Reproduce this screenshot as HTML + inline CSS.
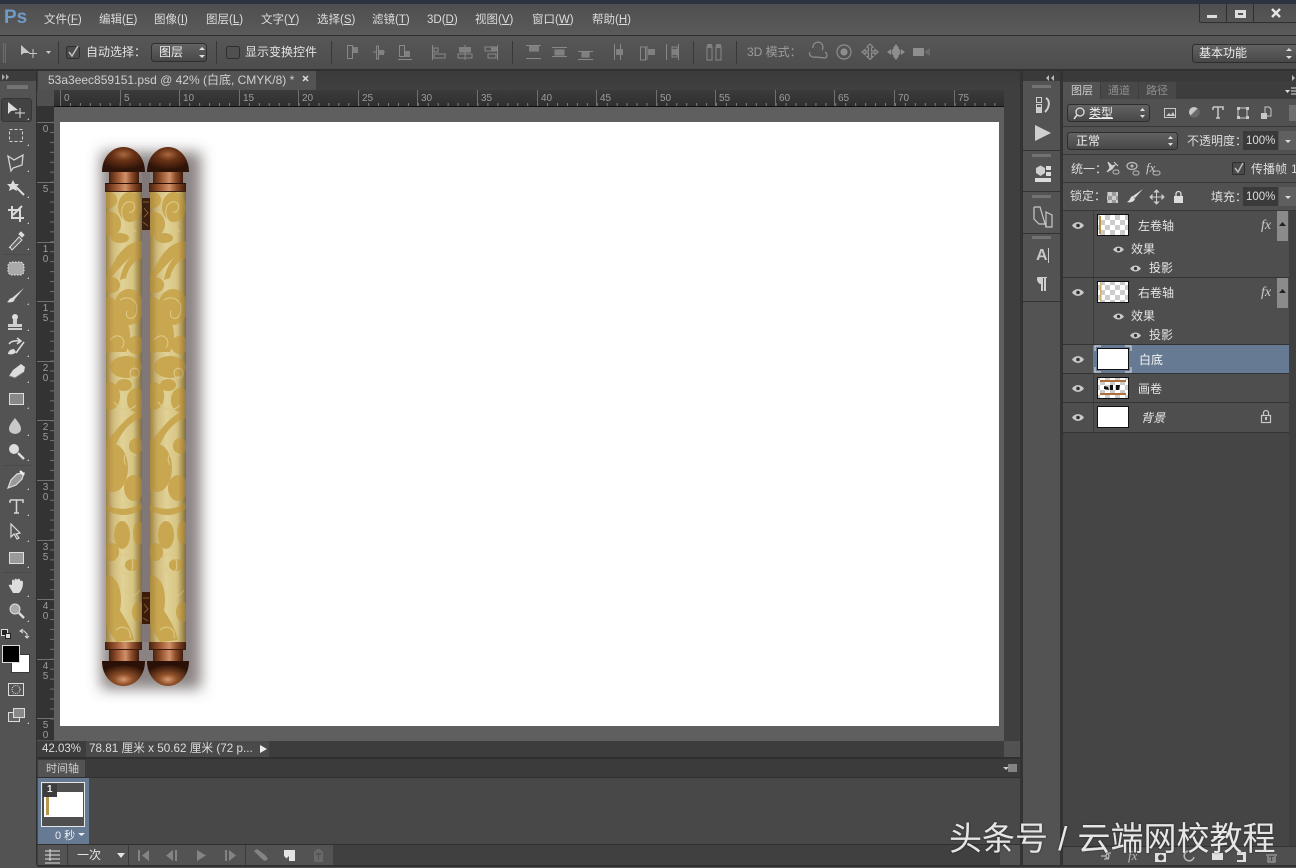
<!DOCTYPE html>
<html><head><meta charset="utf-8">
<style>
html,body{margin:0;padding:0;background:#535353}
body{width:1296px;height:868px;overflow:hidden;position:relative;font-family:"Liberation Sans","Noto Sans CJK SC",sans-serif;font-size:12px;color:#d8d8d8}
svg.o{position:absolute;left:0;top:0}
.t{position:absolute;white-space:nowrap;line-height:16px}
.m{color:#dcdcdc;top:12px;font-size:11.5px}
.m u{text-decoration:underline}
.r{position:absolute;top:93px;font-size:10px;color:#9c9c9c;line-height:12px}
.v{position:absolute;left:41px;font-size:10px;color:#9c9c9c;line-height:10px;width:9px;text-align:center}
.l{color:#e4e4e4;font-size:12px}
.w{position:absolute;left:949px;top:819px;font-size:33px;line-height:40px;color:#e6e6e6;font-weight:400;white-space:nowrap;word-spacing:1px;text-shadow:0 0 2px rgba(0,0,0,.45)}
</style></head><body>
<svg class="o" width="1296" height="868" viewBox="0 0 1296 868" xmlns="http://www.w3.org/2000/svg">
<defs>
<linearGradient id="bar" x1="0" y1="0" x2="0" y2="1"><stop offset="0" stop-color="#4f4f4f"/><stop offset="1" stop-color="#5a5a5a"/></linearGradient>
<linearGradient id="opt" x1="0" y1="0" x2="0" y2="1"><stop offset="0" stop-color="#575757"/><stop offset="1" stop-color="#4d4d4d"/></linearGradient>
<linearGradient id="sel" x1="0" y1="0" x2="0" y2="1"><stop offset="0" stop-color="#636363"/><stop offset="1" stop-color="#474747"/></linearGradient>
<linearGradient id="rul" x1="0" y1="0" x2="0" y2="1"><stop offset="0" stop-color="#3b3b3b"/><stop offset="1" stop-color="#2f2f2f"/></linearGradient>
<linearGradient id="tab" x1="0" y1="0" x2="0" y2="1"><stop offset="0" stop-color="#3a3a3a"/><stop offset="1" stop-color="#404040"/></linearGradient>
<linearGradient id="body" x1="0" y1="0" x2="1" y2="0"><stop offset="0" stop-color="#b59b55"/><stop offset=".15" stop-color="#cdb777"/><stop offset=".45" stop-color="#e0d196"/><stop offset=".72" stop-color="#d8c786"/><stop offset=".92" stop-color="#b9a25f"/><stop offset="1" stop-color="#9c864d"/></linearGradient>
<linearGradient id="edge" x1="0" y1="0" x2="1" y2="0"><stop offset="0" stop-color="#6e5020" stop-opacity=".32"/><stop offset=".22" stop-color="#6e5020" stop-opacity="0"/><stop offset=".78" stop-color="#6e5020" stop-opacity="0"/><stop offset="1" stop-color="#5e4a28" stop-opacity=".45"/></linearGradient>
<linearGradient id="cop" x1="0" y1="0" x2="1" y2="0"><stop offset="0" stop-color="#4b200d"/><stop offset=".3" stop-color="#9c5833"/><stop offset=".55" stop-color="#d09068"/><stop offset=".75" stop-color="#8e4d2b"/><stop offset="1" stop-color="#3e1a0a"/></linearGradient>
<radialGradient id="d1" cx=".5" cy=".3" r=".62"><stop offset="0" stop-color="#a8683f"/><stop offset=".4" stop-color="#6a3216"/><stop offset="1" stop-color="#2e1308"/></radialGradient>
<radialGradient id="d2" cx=".5" cy=".74" r=".6"><stop offset="0" stop-color="#d89a72"/><stop offset=".35" stop-color="#8f5029"/><stop offset="1" stop-color="#2a1006"/></radialGradient>
<pattern id="chk" width="10" height="10" patternUnits="userSpaceOnUse"><rect width="10" height="10" fill="#fff"/><rect width="5" height="5" fill="#ccc"/><rect x="5" y="5" width="5" height="5" fill="#ccc"/></pattern>
<pattern id="chk2" width="8" height="8" patternUnits="userSpaceOnUse"><rect width="8" height="8" fill="#ccc"/><rect width="4" height="4" fill="#999"/><rect x="4" y="4" width="4" height="4" fill="#999"/></pattern>
<pattern id="hmin" width="9.94" height="3" patternUnits="userSpaceOnUse" x="60" y="103"><rect x="0" y="0" width="1" height="3" fill="#7c7c7c"/></pattern>
<pattern id="vmin" width="4" height="9.94" patternUnits="userSpaceOnUse" x="50" y="122"><rect x="0" y="0" width="4" height="1" fill="#707070"/></pattern>
<clipPath id="cb"><rect x="0" y="191" width="36" height="451"/></clipPath>
<filter id="bl" x="-40%" y="-10%" width="180%" height="120%"><feGaussianBlur stdDeviation="7"/></filter>
<g id="clouds" clip-path="url(#cb)">
<g fill="#c9a650">
<ellipse cx="24" cy="207" rx="12" ry="15"/><ellipse cx="4" cy="224" rx="11" ry="12"/><ellipse cx="14" cy="238" rx="9" ry="5"/><ellipse cx="3" cy="200" rx="8" ry="8"/>
<path d="M37 241C24 241 14 250 8 262L0 276 0 282C12 272 20 256 37 251Z"/>
<path d="M37 258C28 260 22 268 20 278L14 280C16 266 24 254 37 250Z"/><ellipse cx="5" cy="285" rx="9" ry="8"/>
<ellipse cx="23" cy="307" rx="15" ry="18"/><ellipse cx="3" cy="325" rx="13" ry="28"/><path d="M8 300C24 320 28 336 20 352L2 352 0 300Z"/>
<ellipse cx="30" cy="345" rx="9" ry="9"/><ellipse cx="20" cy="367" rx="16" ry="11"/><ellipse cx="4" cy="396" rx="10" ry="14"/><ellipse cx="30" cy="400" rx="9" ry="12"/><ellipse cx="18" cy="385" rx="8" ry="6"/>
<path d="M37 418C26 420 18 428 10 444L0 448 0 442C10 432 20 414 37 410Z"/>
<ellipse cx="7" cy="468" rx="15" ry="24"/><ellipse cx="28" cy="488" rx="10" ry="13"/><ellipse cx="30" cy="446" rx="7" ry="8"/><path d="M0 505C12 510 24 511 37 502L37 508C24 518 10 516 0 510Z"/>
<ellipse cx="16" cy="535" rx="8" ry="14"/><ellipse cx="33" cy="533" rx="6" ry="12"/><ellipse cx="6" cy="552" rx="7" ry="9"/><ellipse cx="26" cy="565" rx="7" ry="6"/>
<ellipse cx="3" cy="600" rx="12" ry="24"/><path d="M2 590C12 610 24 622 28 640L10 642 0 625Z"/><ellipse cx="33" cy="612" rx="7" ry="10"/>
</g>
<g fill="none" stroke="#dcc987" stroke-width="1.100">
<path d="M20 222C12 215 16 200 25 202 32 204 28 214 23 212"/><path d="M30 232C24 226 22 236 27 238"/>
<path d="M14 300C24 294 34 302 30 314 27 322 18 318 21 311"/><path d="M4 340C12 330 22 340 16 348"/>
<path d="M26 378C20 370 30 364 33 372 34 378 28 380 27 376"/><path d="M8 402C14 410 24 412 30 405"/>
<path d="M20 465C14 455 24 448 30 456"/><path d="M10 560C18 548 30 556 26 570 22 578 14 574 17 566"/>
<path d="M18 590C24 600 30 596 34 590"/><path d="M10 630C16 624 26 628 24 638"/>
</g>
</g>
</defs>
<rect width="1296" height="868" fill="#535353"/>
<rect width="1296" height="4" fill="#2e3342"/>
<rect y="4" width="1296" height="31" fill="url(#bar)"/>
<rect y="35" width="1296" height="1" fill="#2f2f2f"/>
<rect y="36" width="1296" height="33" fill="url(#opt)"/>
<rect y="69" width="1296" height="2" fill="#303030"/>

<!-- window buttons -->
<path d="M1199 4V21Q1199 23 1201 23H1296V22H1201Q1200 22 1200 21V4Z" fill="#2f2f2f"/>
<rect x="1226" y="4" width="1" height="18" fill="#2f2f2f"/><rect x="1253" y="4" width="1" height="18" fill="#2f2f2f"/>
<rect x="1207" y="15" width="10" height="3" fill="#ddd"/>
<path d="M1235 10h11v8h-11zM1238 13v2h5v-2z" fill="#ddd" fill-rule="evenodd"/>
<path d="M1272 9l8 8M1280 9l-8 8" stroke="#e4e4e4" stroke-width="2.4"/>

<!-- options bar -->
<rect x="3" y="43" width="1" height="20" fill="#6f6f6f"/><rect x="5" y="43" width="1" height="20" fill="#6f6f6f"/>
<path d="M21 45v10l3-2 6 0z" fill="#c8c8c8"/>
<path d="M33 49v9M29 53.5h8" stroke="#c8c8c8" stroke-width="1"/>
<path d="M46 51l5 0-2.500 3z" fill="#c8c8c8"/>
<g fill="#383838"><rect x="58" y="41" width="1" height="23"/><rect x="216" y="41" width="1" height="23"/><rect x="331" y="41" width="1" height="23"/><rect x="512" y="41" width="1" height="23"/><rect x="693" y="41" width="1" height="23"/><rect x="736" y="41" width="1" height="23"/></g>
<rect x="66.500" y="46.500" width="13" height="12" rx="2" fill="#4a4a4a" stroke="#2e2e2e"/>
<path d="M69 52l3 4 6-10" fill="none" stroke="#bbb" stroke-width="1.600"/>
<rect x="151.500" y="43.500" width="55" height="18" rx="3" fill="url(#sel)" stroke="#2e2e2e"/>
<path d="M199 50l3-3 3 3zM199 55l3 3 3-3z" fill="#ddd"/>
<rect x="226.500" y="46.500" width="13" height="12" rx="2" fill="#505050" stroke="#2e2e2e"/>
<g fill="none" stroke="#888" stroke-width="1">
<path d="M347.500 45.500h5v13h-5z"/><path d="M373 52h4M383 52h2M378.500 46v13h-2v-13z M378.500 46h-2"/><path d="M399.500 45.500h5v11h-5zM398 59.500h14"/>
<path d="M432.500 45v15M434 48h4v4h-4zM434 54h11v4h-11z"/>
<path d="M465 45v15M460 48h10v4h-10zM458 54h14v4h-14z"/>
<path d="M497.500 45v15M485 47h11v4h-11zM488 54h8v4h-8z"/>
<path d="M526 45.500h15M529 51h10M526 58.500h15"/><path d="M552 47.500h15M552 56.500h15M555 50h9v5h-9z"/><path d="M578 59.500h15M582 52h7v5h-7zM578 51.500h15"/>
<path d="M614.500 44v16M620.500 44v16"/><path d="M640.500 47v13h5v-13zM647 46v14"/><path d="M666.500 44v16M672 47h5v10h-5zM678.500 44v16"/>
<path d="M707 47h5v13h-5zM716 47h5v13h-5z"/>
</g>
<g fill="#808080"><rect x="353" y="47" width="5" height="6"/><rect x="379" y="50" width="5" height="5"/><rect x="405" y="51" width="5" height="6"/><rect x="459" y="47" width="12" height="5"/><rect x="491" y="47" width="6" height="4"/><rect x="529" y="46" width="10" height="5"/><rect x="555" y="50" width="9" height="5"/><rect x="582" y="52" width="7" height="5"/><rect x="616" y="49" width="7" height="6"/><rect x="648" y="49" width="7" height="6"/><rect x="672" y="49" width="6" height="6"/><rect x="707" y="44" width="5" height="4"/><rect x="716" y="44" width="5" height="4"/></g>
<!-- 3D icons -->
<g fill="none" stroke="#8e8e8e" stroke-width="1.200">
<path d="M810 52c-2 3 2 6 6 5l9 1c3-1 2-5 0-6M813 48a5 5 0 1 1 9 2"/>
<circle cx="844" cy="52" r="7"/><circle cx="844" cy="52" r="3" fill="#8e8e8e"/>
<path d="M870 44l3 3-1.500 1v3h3.500v-1.500l3 2.500-3 2.500v-1.500h-3.500v3.500l1.500 0-3 3-3-3h1.500v-3.500h-3.500v1.500l-3-2.500 3-2.500v1.500h3.500v-3l-1.500-1z"/>
</g>
<g fill="#8e8e8e"><circle cx="896" cy="52" r="4.500"/><path d="M896 44l3 4h-6zM896 60l3-4h-6zM887 52l4-3v6zM905 52l-4-3v6z"/><rect x="913" y="48" width="11" height="8"/><path d="M924 52l6-4v8z" fill="#6a6a6a"/></g>
<rect x="1192.500" y="44.500" width="110" height="18" rx="3" fill="url(#sel)" stroke="#2e2e2e"/>
<path d="M1286 51l3-3 3 3zM1286 56l3 3 3-3z" fill="#ddd"/>

<!-- tool column -->
<rect x="0" y="71" width="36" height="797" fill="#535353"/>
<rect x="36" y="71" width="1" height="794" fill="#303030"/>
<rect x="0" y="71" width="36" height="10" fill="#3c3c3c"/>
<path d="M2 74l3 3-3 3zM6 74l3 3-3 3z" fill="#aaa"/>
<rect x="7" y="85" width="21" height="4" fill="#8a8a8a" opacity=".6"/>
<rect x="1.500" y="98.500" width="30" height="23" rx="3" fill="#434343" stroke="#363636"/>
<path d="M8 102v12l3-3 7-1z" fill="#ddd"/><path d="M20 108v10M15 113h10" stroke="#ddd"/>
<path d="M27 120l2-2v2zM27 146l2-2v2zM27 172l2-2v2zM27 198l2-2v2zM27 224l2-2v2zM27 250l2-2v2zM27 279l2-2v2zM27 305l2-2v2zM27 331l2-2v2zM27 357l2-2v2zM27 383l2-2v2zM27 409l2-2v2zM27 436l2-2v2zM27 461l2-2v2zM27 490l2-2v2zM27 516l2-2v2zM27 542l2-2v2zM27 568l2-2v2zM27 597l2-2v2zM27 622l2-2v2zM27 724l2-2v2z" fill="#c0c0c0"/>
<rect x="9.500" y="129.500" width="13" height="12" fill="none" stroke="#d2d2d2" stroke-dasharray="3 2"/>
<path d="M8 156l6 4 9-5-1 10-9 3-2 3-1-5z" fill="none" stroke="#d2d2d2" stroke-width="1.300"/>
<path d="M13 180l2 4 4 0-3 3 1 4-4-2-4 2 1-4-3-3 4 0z" fill="#ddd"/><path d="M16 187l8 8" stroke="#ddd" stroke-width="2"/>
<path d="M12 206v12h12M8 210h12v12M22 206l-9 9" fill="none" stroke="#d8d8d8" stroke-width="2"/>
<path d="M10 247l-1 1 10-11 3 3-10 10z" fill="#666" stroke="#ddd"/><path d="M19 234l2-2 3 3-2 2z" fill="#ddd" stroke="#ddd"/>
<rect x="8" y="262" width="16" height="13" rx="4" fill="#aaa"/><rect x="8" y="262" width="16" height="13" rx="4" fill="none" stroke="#eee" stroke-dasharray="1.500 1.500"/>
<path d="M24 288l-10 12-2-2z" fill="#ddd"/><path d="M12 298c2 0 3 2 2 3s-4 2-7 1c2-1 2-4 5-4z" fill="#ddd"/>
<circle cx="15" cy="317" r="3" fill="#ddd"/><path d="M13 319h4v5h5v3H8v-3h5zM8 328h14v2H8z" fill="#cfcfcf"/>
<path d="M9 344c3-4 8-3 11-3M17 338l4 3-4 3M24 342l-8 11" fill="none" stroke="#ddd" stroke-width="1.500"/><path d="M14 349c-3 0-6 2-6 5 3 1 7 0 8-2z" fill="#ddd"/>
<path d="M13 370l8-6 4 3-1 5-9 6-6-2z" fill="#ddd"/><path d="M9 376l6 2 9-6" fill="none" stroke="#777"/>
<rect x="9.500" y="393.500" width="14" height="11" fill="#888" stroke="#ddd"/>
<path d="M15 418c3 4 6 7 6 11a6 5 0 0 1-12 0c0-4 3-7 6-11z" fill="#c8c8c8"/>
<circle cx="14" cy="449" r="5" fill="#ddd"/><path d="M18 453l6 6" stroke="#ddd" stroke-width="2.500"/>
<path d="M24 473l-7 1-6 6-3 8 8-3 6-6z" fill="#999" stroke="#ddd" stroke-width="1.200"/>
<path d="M20 471l4 4" stroke="#eee" stroke-width="2.500"/>
<path d="M10 500h13v3M10 500v3M16.500 500v13M14 513h5" fill="none" stroke="#d8d8d8" stroke-width="1.500"/>
<path d="M11 524v13l3-3 3 5 2-1-3-4 4-1z" fill="#555" stroke="#ddd" stroke-width="1.200"/>
<rect x="9.500" y="552.500" width="14" height="11" fill="#9a9a9a" stroke="#ddd"/>
<path d="M9 586c-1-1 1-2 3-1v-4c0-2 2-2 2 0l1-2c1-1 2 0 2 1l1-1c1-1 2 0 2 1v1c1-1 3 0 3 1 0 5-1 8-4 11h-6z" fill="#ddd"/>
<circle cx="15" cy="609" r="5" fill="#aaa" stroke="#ddd"/><path d="M19 613l5 5" stroke="#ddd" stroke-width="2.500"/>
<g fill="#4a4a4a"><rect x="3" y="254" width="28" height="1"/><rect x="3" y="465" width="28" height="1"/><rect x="3" y="572" width="28" height="1"/></g>
<rect x="1.500" y="629.500" width="6" height="6" fill="#222" stroke="#ddd"/><rect x="5.500" y="633.500" width="5" height="5" fill="#ddd" stroke="#222"/>
<path d="M20 631h4l3 3v4M23 629l-3 2 3 2M25 636l2 2 2-2" fill="none" stroke="#ddd"/>
<rect x="11.500" y="654.500" width="18" height="18" fill="#fff" stroke="#3a3a3a"/>
<rect x="2.500" y="645.500" width="17" height="17" fill="#000" stroke="#ddd"/>
<rect x="8.500" y="683.500" width="15" height="12" fill="#555" stroke="#ddd"/><circle cx="16" cy="689.500" r="4" fill="none" stroke="#ddd" stroke-dasharray="1 1"/>
<rect x="8.500" y="712.500" width="11" height="9" fill="#666" stroke="#ddd"/><rect x="13.500" y="708.500" width="11" height="9" fill="#888" stroke="#ddd"/>

<!-- tab bar -->
<rect x="37" y="71" width="983" height="19" fill="url(#tab)"/>
<rect x="38" y="71" width="278" height="19" fill="#535353"/>
<path d="M303 76l5 5M308 76l-5 5" stroke="#ddd" stroke-width="1.500"/>
<!-- rulers -->
<rect x="37" y="90" width="967" height="16" fill="url(#rul)"/>
<rect x="37" y="90" width="17" height="16" fill="#505050"/>
<rect x="37" y="106" width="17" height="634" fill="#333"/>
<rect x="55" y="103" width="949" height="3" fill="url(#hmin)"/>
<rect x="50" y="122" width="4" height="604" fill="url(#vmin)"/>
<g fill="#707070"><rect x="60" y="90" width="1" height="16"/><rect x="120" y="90" width="1" height="16"/><rect x="179" y="90" width="1" height="16"/><rect x="239" y="90" width="1" height="16"/><rect x="298" y="90" width="1" height="16"/><rect x="358" y="90" width="1" height="16"/><rect x="417" y="90" width="1" height="16"/><rect x="477" y="90" width="1" height="16"/><rect x="537" y="90" width="1" height="16"/><rect x="596" y="90" width="1" height="16"/><rect x="656" y="90" width="1" height="16"/><rect x="715" y="90" width="1" height="16"/><rect x="775" y="90" width="1" height="16"/><rect x="834" y="90" width="1" height="16"/><rect x="894" y="90" width="1" height="16"/><rect x="954" y="90" width="1" height="16"/>
<rect x="37" y="122" width="17" height="1"/><rect x="37" y="182" width="17" height="1"/><rect x="37" y="242" width="17" height="1"/><rect x="37" y="301" width="17" height="1"/><rect x="37" y="361" width="17" height="1"/><rect x="37" y="420" width="17" height="1"/><rect x="37" y="480" width="17" height="1"/><rect x="37" y="540" width="17" height="1"/><rect x="37" y="599" width="17" height="1"/><rect x="37" y="659" width="17" height="1"/><rect x="37" y="718" width="17" height="1"/></g>
<rect x="54" y="106" width="950" height="1" fill="#111"/>
<rect x="54" y="107" width="950" height="634" fill="#5f5f5f"/>
<rect x="60" y="122" width="939" height="604" fill="#fff"/>
<!-- scrollbars -->
<rect x="1004" y="90" width="16" height="651" fill="#3f3f3f"/>
<rect x="37" y="741" width="967" height="16" fill="#3d3d3d"/>
<rect x="86" y="741" width="183" height="16" fill="#4a4a4a"/>
<rect x="1004" y="741" width="16" height="16" fill="#525252"/>
<path d="M260 745l7 4-7 4z" fill="#eee"/>
<rect x="1020" y="71" width="3" height="794" fill="#333"/>

<!-- scroll art shadow -->
<g filter="url(#bl)"><rect x="101" y="152" width="100" height="537" fill="#5a5050" opacity=".7"/></g>
<rect x="142" y="172" width="8" height="470" fill="#807878"/>
<g transform="translate(142 198)"><rect width="8" height="32" fill="#3a2010"/><path d="M1 4h6M2 10l4 5-4 4M1 24l5 4" stroke="#8a5a30" fill="none"/></g>
<g transform="translate(142 592)"><rect width="8" height="32" fill="#3a1c0c"/><path d="M1 6h6M2 12l4 5-4 4M1 26l5 3" stroke="#8a5a30" fill="none"/></g>
<g>
<g transform="translate(106 0)"><rect x="0" y="191" width="36" height="451" fill="url(#body)"/><use href="#clouds"/><rect x="0" y="191" width="36" height="451" fill="url(#edge)"/></g>
<rect x="109" y="172" width="30" height="12" fill="url(#cop)"/><rect x="105" y="183" width="37" height="9" fill="url(#cop)"/><rect x="105" y="183" width="37" height="1" fill="#2c1206"/><rect x="105" y="191" width="37" height="1" fill="#3e2010"/>
<rect x="105" y="642" width="37" height="8" fill="url(#cop)"/><rect x="109" y="650" width="30" height="12" fill="url(#cop)"/><rect x="105" y="649" width="37" height="1" fill="#3a1a0a"/>
<path d="M102 172c0-15 10-25 21.500-25S145 157 145 172z" fill="url(#d1)"/>
<path d="M102 661c0 15 10 25 21.500 25S145 676 145 661z" fill="url(#d2)"/>
</g>
<g>
<g transform="translate(150 0)"><rect x="0" y="191" width="36" height="451" fill="url(#body)"/><use href="#clouds"/><rect x="0" y="191" width="36" height="451" fill="url(#edge)"/></g>
<rect x="153" y="172" width="30" height="12" fill="url(#cop)"/><rect x="149" y="183" width="37" height="9" fill="url(#cop)"/><rect x="149" y="183" width="37" height="1" fill="#2c1206"/><rect x="149" y="191" width="37" height="1" fill="#3e2010"/>
<rect x="149" y="642" width="37" height="8" fill="url(#cop)"/><rect x="153" y="650" width="30" height="12" fill="url(#cop)"/><rect x="149" y="649" width="37" height="1" fill="#3a1a0a"/>
<path d="M147 172c0-15 10-25 21-25s21 10 21 25z" fill="url(#d1)"/>
<path d="M147 661c0 15 10 25 21 25s21-10 21-25z" fill="url(#d2)"/>
</g>

<!-- timeline -->
<rect x="37" y="757" width="983" height="2" fill="#303030"/>
<rect x="37" y="759" width="983" height="19" fill="#3b3b3b"/>
<rect x="38" y="760" width="47" height="18" fill="#535353"/>
<rect x="37" y="778" width="983" height="67" fill="#484848"/>
<rect x="37" y="777" width="983" height="1" fill="#303030"/>
<path d="M1003 767h6l-3 3z" fill="#ccc"/><path d="M1008 765h9M1008 767h9M1008 769h9M1008 771h9" stroke="#ccc"/>
<rect x="38" y="778" width="51" height="66" fill="#667a94"/>
<rect x="41.500" y="782.500" width="43" height="44" fill="#4f4f4f" stroke="#e6e6e6"/>
<rect x="44" y="792" width="39" height="25" fill="#fff"/>
<rect x="46" y="796" width="3" height="19" fill="#b8964e"/>
<rect x="43" y="784" width="14" height="13" fill="#3d3d3d"/>
<path d="M78 833h7l-3.500 3z" fill="#eee"/>
<rect x="37" y="845" width="963" height="20" fill="#404040"/>
<rect x="38" y="845" width="295" height="20" fill="#535353"/>
<rect x="1000" y="845" width="20" height="20" fill="#535353"/>
<rect x="37" y="844" width="983" height="1" fill="#303030"/>
<rect x="37" y="865" width="1259" height="2" fill="#303030"/>
<g fill="#3a3a3a"><rect x="67" y="845" width="1" height="20"/><rect x="128" y="845" width="1" height="20"/><rect x="245" y="845" width="1" height="20"/></g>
<path d="M45 851h15M45 855h15M45 859h15M50 849v12M45 863h15" stroke="#e0e0e0" fill="none"/>
<path d="M117 853h8l-4 5z" fill="#e4e4e4"/>
<g fill="#848484"><path d="M138 850h2v11h-2zM149 850v11l-7-5.500z"/><path d="M173 850v11l-7-5.500zM175 850h2v11h-2z"/><path d="M197 850v11l9-5.500z"/><path d="M225 850h2v11h-2zM229 850v11l7-5.500z"/><path d="M254 851l3-2 8 6 1 1 2 3-3 2-3-2z"/></g>
<path d="M284 850h11v11h-6l-5-5z" fill="#e4e4e4"/><path d="M289 856v5h-5" fill="#555"/>
<path d="M314 852h9M316 850h5M315 853v8h7v-8M317 855v5M320 855v5" stroke="#7e7e7e" fill="none"/>

<!-- dock -->
<rect x="1023" y="71" width="273" height="10" fill="#3a3a3a"/>
<rect x="1023" y="81" width="37" height="784" fill="#535353"/>
<rect x="1060" y="71" width="3" height="794" fill="#333"/>
<g fill="#333"><rect x="1023" y="150" width="37" height="1"/><rect x="1023" y="191" width="37" height="1"/><rect x="1023" y="233" width="37" height="1"/><rect x="1023" y="301" width="37" height="1"/></g>
<g fill="#888" opacity=".6"><rect x="1032" y="85" width="19" height="3"/><rect x="1032" y="154" width="19" height="3"/><rect x="1032" y="195" width="19" height="3"/><rect x="1032" y="236" width="19" height="3"/></g>
<path d="M1049 75l-3 3 3 3zM1054 75l-3 3 3 3z" fill="#bbb"/><path d="M1292 75l3 3-3 3z" fill="#bbb"/>
<g fill="none" stroke="#d0d0d0"><rect x="1036.500" y="97.500" width="5" height="5"/><rect x="1036.500" y="104.500" width="5" height="5"/><rect x="1036.500" y="107.500" width="5" height="5" fill="#ccc"/><path d="M1046 98c4 2 4 9-1 14" stroke-width="2"/></g>
<path d="M1035 125l16 8-16 8z" fill="#cfcfcf"/>
<path d="M1036 168l4.500-2.500 4.500 2.500v5l-4.500 3-4.500-3z" fill="#cfcfcf"/><rect x="1046" y="166" width="5" height="4" fill="#ddd"/><rect x="1046" y="172" width="5" height="4" fill="#ddd"/><rect x="1035" y="178" width="16" height="4" fill="#dcdcdc"/>
<path d="M1034 207h6l6 20M1034 207v12l5 5h7M1046 212l6 3v12h-6z" fill="none" stroke="#c8c8c8" stroke-width="1.200"/>
<rect x="1048" y="248" width="1" height="15" fill="#ccc"/>
<path d="M1038 277h9v1h-1v13h-2v-13h-1v13h-2v-7c-4 0-5-7-3-7z" fill="#cfcfcf"/>

<!-- layers panel -->
<rect x="1063" y="81" width="233" height="784" fill="#454545"/>
<rect x="1063" y="81" width="233" height="18" fill="#3d3d3d"/>
<rect x="1063" y="82" width="37" height="17" fill="#535353"/>
<rect x="1101" y="82" width="37" height="17" fill="#484848"/><rect x="1139" y="82" width="37" height="17" fill="#484848"/>
<rect x="1063" y="99" width="233" height="112" fill="#515151"/>
<g fill="#383838"><rect x="1063" y="126" width="233" height="1"/><rect x="1063" y="154" width="233" height="1"/><rect x="1063" y="182" width="233" height="1"/><rect x="1063" y="210" width="233" height="1"/></g>
<path d="M1285 90h5l-2.500 3z" fill="#ddd"/><path d="M1291 88h5M1291 91h5M1291 94h5" stroke="#ddd"/>
<rect x="1067.500" y="104.500" width="82" height="17" rx="3" fill="url(#sel)" stroke="#2e2e2e"/>
<circle cx="1080" cy="112" r="4" fill="none" stroke="#ddd" stroke-width="1.300"/><path d="M1077 115l-3 4" stroke="#ddd" stroke-width="1.500"/>
<path d="M1140 111l2.500-3 2.500 3zM1140 115l2.500 3 2.500-3z" fill="#ddd"/>
<rect x="1164.500" y="108.500" width="11" height="9" fill="none" stroke="#c8c8c8"/><path d="M1166 116l3-3 2 2 2-3 2 4z" fill="#ccc"/>
<circle cx="1194" cy="112" r="5" fill="#c8c8c8"/><path d="M1190 116a5 5 0 0 0 8-8z" fill="#6a6a6a"/>
<path d="M1213 107h10v3M1213 107v3M1218 107v11M1216 118h4" fill="none" stroke="#c8c8c8" stroke-width="1.500"/>
<path d="M1238 108h9v10h-9z" fill="none" stroke="#c8c8c8"/><g fill="#c8c8c8"><rect x="1237" y="107" width="3" height="3"/><rect x="1246" y="107" width="3" height="3"/><rect x="1237" y="116" width="3" height="3"/><rect x="1246" y="116" width="3" height="3"/></g>
<path d="M1265 107h4l2 2v7h-6z" fill="none" stroke="#c8c8c8"/><rect x="1261" y="113" width="6" height="6" fill="#c8c8c8"/>
<rect x="1289" y="105" width="7" height="16" fill="#6f6f6f"/>
<rect x="1067.500" y="132.500" width="110" height="17" rx="3" fill="url(#sel)" stroke="#2e2e2e"/>
<path d="M1168 139l2.500-3 2.500 3zM1168 143l2.500 3 2.500-3z" fill="#ddd"/>
<rect x="1243" y="131" width="35" height="19" fill="#3a3a3a"/><rect x="1279" y="131" width="17" height="19" fill="#5f5f5f"/><path d="M1285 140h6l-3 3z" fill="#ddd"/>
<rect x="1243" y="187" width="35" height="19" fill="#3a3a3a"/><rect x="1279" y="187" width="17" height="19" fill="#5f5f5f"/><path d="M1285 196h6l-3 3z" fill="#ddd"/>
<path d="M1108 162l4 4 3-1-3 4-5 3 3-4zM1114 162l4 4" fill="#cfcfcf" stroke="#cfcfcf"/><rect x="1113" y="170" width="6" height="4" rx="2" fill="none" stroke="#bbb"/>
<ellipse cx="1132" cy="166" rx="5" ry="3.500" fill="none" stroke="#bbb" stroke-width="1.300"/><circle cx="1132" cy="166" r="1.500" fill="#bbb"/><rect x="1133" y="171" width="6" height="4" rx="2" fill="none" stroke="#bbb"/>
<rect x="1153" y="171" width="7" height="4" rx="2" fill="none" stroke="#bbb"/>
<rect x="1232.500" y="162.500" width="12" height="12" rx="1" fill="#4a4a4a" stroke="#2e2e2e"/><path d="M1235 168l3 4 5-9" fill="none" stroke="#bbb" stroke-width="1.500"/>
<rect x="1107" y="192" width="11" height="11" fill="url(#chk2)"/>
<path d="M1143 189l-8 9-2-2zM1133 196c-3 0-2 4-6 6 3 1 7 0 8-3z" fill="#ddd"/>
<path d="M1156.500 191v12M1151 197h12M1156.500 190l-2 2h4zM1156.500 204l-2-2h4zM1150 197l2-2v4zM1164 197l-2-2v4z" stroke="#ccc" fill="#ccc"/>
<rect x="1174" y="196" width="9" height="7" fill="#ddd"/><path d="M1176 196v-2a2.500 2.500 0 0 1 5 0v2" fill="none" stroke="#ddd" stroke-width="1.300"/>

<rect x="1063" y="211" width="226" height="222" fill="#4e4e4e"/>
<rect x="1289" y="211" width="7" height="636" fill="#3f3f3f"/>
<rect x="1093" y="211" width="1" height="222" fill="#3b3b3b"/>
<g fill="#333"><rect x="1063" y="277" width="226" height="1"/><rect x="1063" y="344" width="226" height="1"/><rect x="1063" y="373" width="226" height="1"/><rect x="1063" y="402" width="226" height="1"/><rect x="1063" y="432" width="226" height="1"/></g>
<rect x="1093" y="345" width="196" height="28" fill="#667a94"/>
<rect x="1063" y="345" width="30" height="28" fill="#535353"/>
<rect x="1097.500" y="214.500" width="31" height="21" fill="url(#chk)" stroke="#111"/><rect x="1099" y="216" width="2" height="18" fill="#b8964e"/>
<rect x="1097.500" y="281.500" width="31" height="21" fill="url(#chk)" stroke="#111"/><rect x="1100" y="283" width="1.500" height="18" fill="#cdb06a"/>
<rect x="1097.500" y="348.500" width="31" height="21" fill="#fff" stroke="#111"/>
<path d="M1095 351v-5h6M1131 351v-5h-6M1095 367v5h6M1131 367v5h-6" fill="none" stroke="#e4e4e4" stroke-width="1"/>
<rect x="1097.500" y="377.500" width="31" height="21" fill="url(#chk)" stroke="#111"/><rect x="1100" y="380" width="26" height="2" fill="#b0703c"/><rect x="1100" y="393" width="26" height="2" fill="#b0703c"/><path d="M1104 386l4 1 1 3-5-1zM1110 385h3v5h-3zM1116 385h4l-1 5h-3z" fill="#111"/>
<rect x="1097.500" y="406.500" width="31" height="21" fill="#fff" stroke="#111"/>
<g fill="#c8c8c8"><path d="M1072 225.500c3-4.500 9-4.500 12 0-3 4.500-9 4.500-12 0z"/><path d="M1072 292.500c3-4.500 9-4.500 12 0-3 4.500-9 4.500-12 0z"/><path d="M1072 359.500c3-4.500 9-4.500 12 0-3 4.500-9 4.500-12 0z"/><path d="M1072 388.500c3-4.500 9-4.500 12 0-3 4.500-9 4.500-12 0z"/><path d="M1072 417.500c3-4.500 9-4.500 12 0-3 4.500-9 4.500-12 0z"/><path d="M1113 249.500c3-4 8-4 11 0-3 4-8 4-11 0z"/><path d="M1113 316.500c3-4 8-4 11 0-3 4-8 4-11 0z"/><path d="M1130 268.500c3-4 8-4 11 0-3 4-8 4-11 0z"/><path d="M1130 335.500c3-4 8-4 11 0-3 4-8 4-11 0z"/></g>
<g fill="#333"><circle cx="1078" cy="225.500" r="1.800"/><circle cx="1078" cy="292.500" r="1.800"/><circle cx="1078" cy="359.500" r="1.800"/><circle cx="1078" cy="388.500" r="1.800"/><circle cx="1078" cy="417.500" r="1.800"/><circle cx="1118.500" cy="249.500" r="1.600"/><circle cx="1118.500" cy="316.500" r="1.600"/><circle cx="1135.500" cy="268.500" r="1.600"/><circle cx="1135.500" cy="335.500" r="1.600"/></g>
<rect x="1277" y="211" width="11" height="30" fill="#8b8b8b"/><rect x="1277" y="278" width="11" height="30" fill="#8b8b8b"/>
<path d="M1279 226l3.500-4 3.500 4zM1279 293l3.500-4 3.500 4z" fill="#222"/>
<rect x="1261.500" y="415.500" width="9" height="7" fill="none" stroke="#c8c8c8" stroke-width="1.200"/><path d="M1263.500 415v-2a2.500 2.500 0 0 1 5 0v2" fill="none" stroke="#c8c8c8" stroke-width="1.200"/><rect x="1265" y="417" width="2" height="3" fill="#c8c8c8"/>
<rect x="1063" y="847" width="233" height="18" fill="#4f4f4f"/><rect x="1063" y="846" width="233" height="1" fill="#333"/>
<path d="M1101 856h5M1106 853a3 3 0 0 1 0 6h-2M1109 859a3 3 0 0 1 0-6h2" fill="none" stroke="#b8b8b8" stroke-width="1.300"/>
<rect x="1155" y="853" width="11" height="9" fill="#e0e0e0"/><circle cx="1161" cy="857.500" r="3" fill="#444"/>
<path d="M1188 851a5 5 0 1 0 6 6" fill="none" stroke="#bbb" stroke-width="1.500"/>
<rect x="1212" y="853" width="11" height="7" fill="#e0e0e0"/>
<path d="M1237 852h9v10h-9v-2h6v-5h-6z" fill="#e0e0e0"/>
<path d="M1266 855h11M1268 856v6h7v-6M1270 857v4M1273 857v4" stroke="#b0b0b0" fill="none"/>
</svg>

<div class="t" style="left:4px;top:6px;font-size:19px;font-weight:bold;line-height:24px;color:#6f9bc7">Ps</div>
<div class="t m" style="left:44px">文件(<u>F</u>)</div>
<div class="t m" style="left:99px">编辑(<u>E</u>)</div>
<div class="t m" style="left:154px">图像(<u>I</u>)</div>
<div class="t m" style="left:206px">图层(<u>L</u>)</div>
<div class="t m" style="left:261px">文字(<u>Y</u>)</div>
<div class="t m" style="left:317px">选择(<u>S</u>)</div>
<div class="t m" style="left:372px">滤镜(<u>T</u>)</div>
<div class="t m" style="left:427px">3D(<u>D</u>)</div>
<div class="t m" style="left:475px">视图(<u>V</u>)</div>
<div class="t m" style="left:532px">窗口(<u>W</u>)</div>
<div class="t m" style="left:592px">帮助(<u>H</u>)</div>

<div class="t" style="left:86px;top:44px;color:#e2e2e2">自动选择：</div>
<div class="t" style="left:159px;top:44px;color:#ececec">图层</div>
<div class="t" style="left:245px;top:44px;color:#e2e2e2">显示变换控件</div>
<div class="t" style="left:747px;top:44px;color:#9c9c9c">3D 模式：</div>
<div class="t" style="left:1199px;top:45px;color:#ececec">基本功能</div>

<div class="t" style="left:48px;top:72px;color:#cfcfcf;font-size:12px">53a3eec859151.psd @ 42% (白底, CMYK/8) *</div>

<div class="r" style="left:64px">0</div><div class="r" style="left:124px">5</div><div class="r" style="left:183px">10</div><div class="r" style="left:243px">15</div><div class="r" style="left:302px">20</div><div class="r" style="left:362px">25</div><div class="r" style="left:421px">30</div><div class="r" style="left:481px">35</div><div class="r" style="left:541px">40</div><div class="r" style="left:600px">45</div><div class="r" style="left:660px">50</div><div class="r" style="left:719px">55</div><div class="r" style="left:779px">60</div><div class="r" style="left:838px">65</div><div class="r" style="left:898px">70</div><div class="r" style="left:958px">75</div>

<div class="v" style="top:125px">0</div><div class="v" style="top:185px">5</div><div class="v" style="top:245px">1<br>0</div><div class="v" style="top:304px">1<br>5</div><div class="v" style="top:364px">2<br>0</div><div class="v" style="top:423px">2<br>5</div><div class="v" style="top:483px">3<br>0</div><div class="v" style="top:543px">3<br>5</div><div class="v" style="top:602px">4<br>0</div><div class="v" style="top:662px">4<br>5</div><div class="v" style="top:721px">5<br>0</div>

<div class="t" style="left:42px;top:741px;font-size:11.500px;color:#ddd">42.03%</div>
<div class="t" style="left:89px;top:741px;font-size:11.700px;color:#ddd">78.81 厘米 x 50.62 厘米 (72 p...</div>
<div class="t" style="left:46px;top:761px;font-size:11px;color:#ccc">时间轴</div>
<div class="t" style="left:47px;top:783px;font-size:10px;font-weight:bold;color:#eee;line-height:14px">1</div>
<div class="t" style="left:55px;top:828px;font-size:11px;color:#eee">0 秒</div>
<div class="t" style="left:77px;top:847px;color:#e4e4e4">一次</div>

<div class="t" style="left:1036px;top:248px;font-size:16px;font-weight:bold;color:#c8c8c8">A</div>

<div class="t" style="left:1071px;top:83px;font-size:11px;color:#ccc">图层</div>
<div class="t" style="left:1108px;top:83px;font-size:11px;color:#8e8e8e">通道</div>
<div class="t" style="left:1146px;top:83px;font-size:11px;color:#8e8e8e">路径</div>
<div class="t" style="left:1089px;top:105px;color:#eee"><u>类型</u></div>
<div class="t" style="left:1076px;top:133px;color:#eee">正常</div>
<div class="t" style="left:1187px;top:133px;color:#ddd">不透明度：</div>
<div class="t" style="left:1246px;top:133px;color:#ddd;font-size:11.500px">100%</div>
<div class="t" style="left:1071px;top:161px;color:#ddd">统一：</div>
<div class="t" style="left:1146px;top:160px;color:#ccc;font-style:italic;font-family:'Liberation Serif',serif;font-size:13px">fx</div>
<div class="t" style="left:1251px;top:161px;color:#ddd">传播帧</div>
<div class="t" style="left:1291px;top:161px;color:#ddd">1</div>
<div class="t" style="left:1070px;top:188px;color:#ddd">锁定：</div>
<div class="t" style="left:1211px;top:189px;color:#ddd">填充：</div>
<div class="t" style="left:1246px;top:189px;color:#ddd;font-size:11.500px">100%</div>

<div class="t l" style="left:1138px;top:218px">左卷轴</div>
<div class="t l" style="left:1131px;top:241px">效果</div>
<div class="t l" style="left:1149px;top:260px">投影</div>
<div class="t l" style="left:1138px;top:285px">右卷轴</div>
<div class="t l" style="left:1131px;top:308px">效果</div>
<div class="t l" style="left:1149px;top:327px">投影</div>
<div class="t l" style="left:1139px;top:352px;color:#f4f4f4">白底</div>
<div class="t l" style="left:1138px;top:381px">画卷</div>
<div class="t l" style="left:1141px;top:410px;font-style:italic">背景</div>
<div class="t" style="left:1261px;top:218px;color:#ccc;font-style:italic;font-family:'Liberation Serif',serif;font-size:14px">fx</div>
<div class="t" style="left:1261px;top:285px;color:#ccc;font-style:italic;font-family:'Liberation Serif',serif;font-size:14px">fx</div>
<div class="t" style="left:1128px;top:848px;color:#bbb;font-style:italic;font-family:'Liberation Serif',serif;font-size:13px">fx</div>

<div class="w">头条号 / 云端网校教程</div>
</body></html>
